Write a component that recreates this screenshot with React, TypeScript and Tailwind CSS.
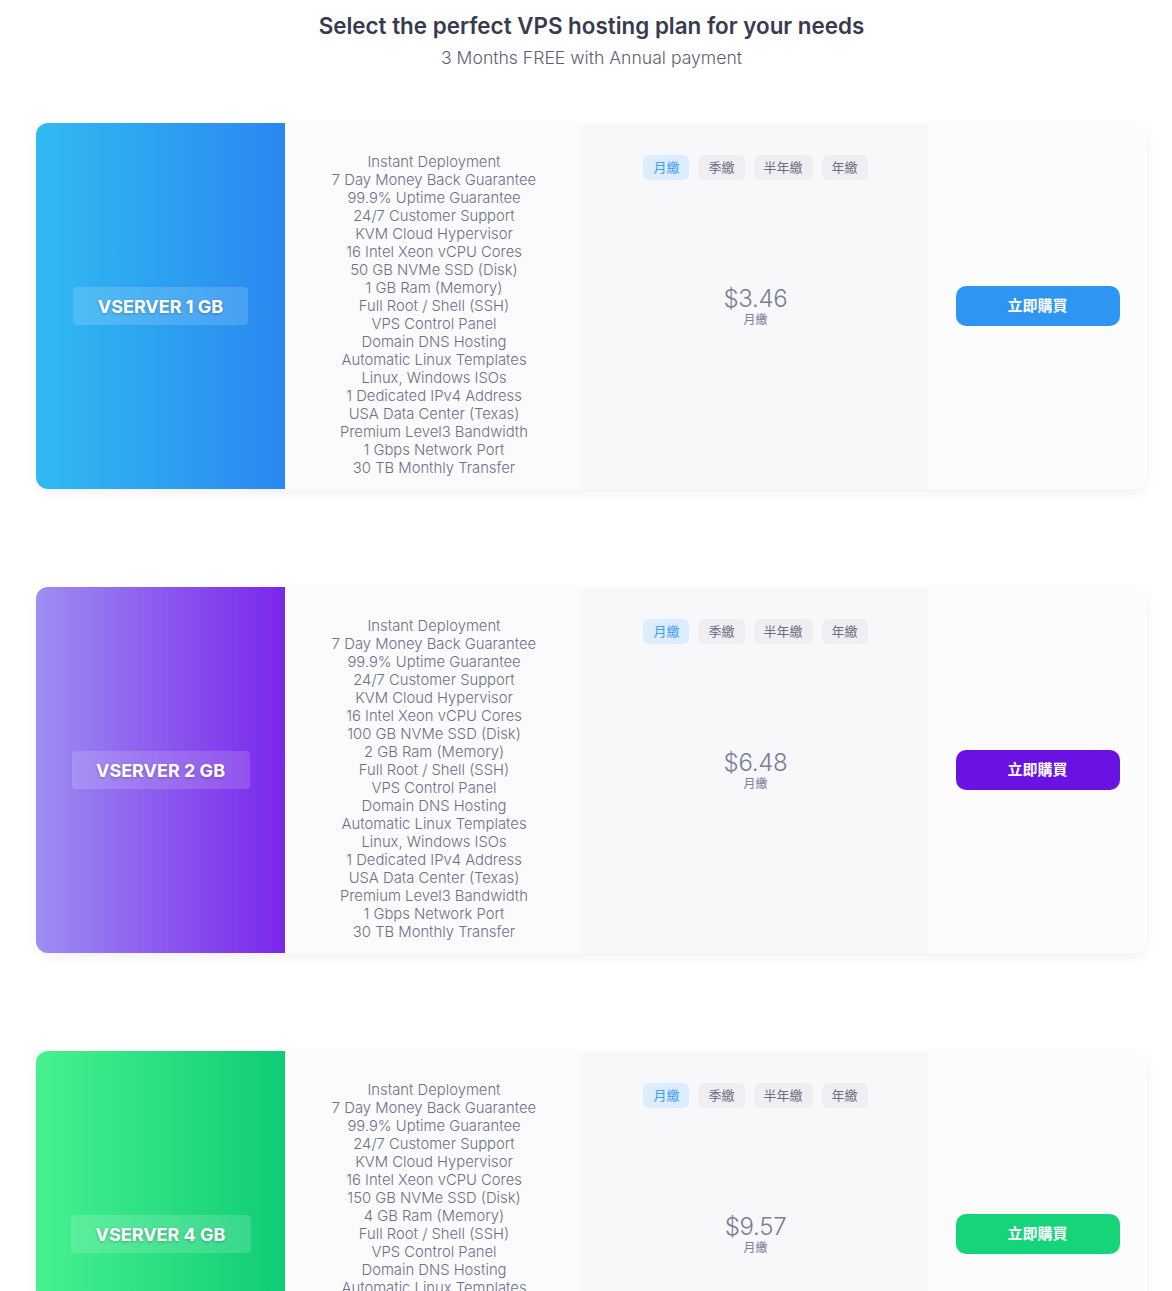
import React from "react";

interface Plan {
  name: string;
  disk: string;
  ram: string;
  price: string;
  panel: string;
  label: string;
  button: string;
}

const plans: Plan[] = [
  {
    name: "VSERVER 1 GB",
    disk: "50 GB NVMe SSD (Disk)",
    ram: "1 GB Ram (Memory)",
    price: "$3.46",
    panel: "bg-[linear-gradient(90deg,#30baf2,#2a88f0)]",
    label: "w-[175px]",
    button: "bg-[#2e95f3]",
  },
  {
    name: "VSERVER 2 GB",
    disk: "100 GB NVMe SSD (Disk)",
    ram: "2 GB Ram (Memory)",
    price: "$6.48",
    panel: "bg-[linear-gradient(90deg,#9d8ef1,#7b26ec)]",
    label: "w-[178px]",
    button: "bg-[#6a12e2]",
  },
  {
    name: "VSERVER 4 GB",
    disk: "150 GB NVMe SSD (Disk)",
    ram: "4 GB Ram (Memory)",
    price: "$9.57",
    panel: "bg-[linear-gradient(90deg,#48f18f,#0ecc75)]",
    label: "w-[180px]",
    button: "bg-[#16d47a]",
  },
];

const features = (p: Plan) => [
  "Instant Deployment",
  "7 Day Money Back Guarantee",
  "99.9% Uptime Guarantee",
  "24/7 Customer Support",
  "KVM Cloud Hypervisor",
  "16 Intel Xeon vCPU Cores",
  p.disk,
  p.ram,
  "Full Root / Shell (SSH)",
  "VPS Control Panel",
  "Domain DNS Hosting",
  "Automatic Linux Templates",
  "Linux, Windows ISOs",
  "1 Dedicated IPv4 Address",
  "USA Data Center (Texas)",
  "Premium Level3 Bandwidth",
  "1 Gbps Network Port",
  "30 TB Monthly Transfer",
];

const tabs = ["月繳", "季繳", "半年繳", "年繳"];

const PlanCard = ({ plan }: { plan: Plan }) => {
  return (
    <section className="flex h-[366px] rounded-xl bg-[#fcfcfd] shadow-[0_4px_12px_rgba(0,0,0,0.06)] overflow-hidden">
      <div className={`w-[249px] shrink-0 flex items-center justify-center ${plan.panel}`}>
        <div
          className={`${plan.label} h-[38px] rounded bg-white/15 flex items-center justify-center text-white font-bold text-[18px] [text-shadow:0_1px_3px_rgba(0,0,0,0.25)]`}
        >
          {plan.name}
        </div>
      </div>
      <div className="w-[298px] shrink-0 bg-[#fbfbfb] flex flex-col items-center pt-[30px] text-[14.8px] leading-[18px] text-[#6b6f8a] font-light whitespace-nowrap">
        {features(plan).map((f) => (
          <div key={f}>{f}</div>
        ))}
      </div>
      <div className="w-[345px] shrink-0 bg-[#f8f8fa] flex flex-col items-center pt-[32px]">
        <div className="flex gap-[9px] text-[13px]">
          {tabs.map((t, i) => (
            <span
              key={t}
              className={
                i === 0
                  ? "h-[25px] px-[10px] flex items-center rounded-md bg-[#dcedff] text-[#3d9df8]"
                  : "h-[25px] px-[10px] flex items-center rounded-md bg-[#efeff3] text-[#6d6d80]"
              }
            >
              {t}
            </span>
          ))}
        </div>
        <div className="mt-[104px] flex flex-col items-center text-[#787d99]">
          <div className="text-[24px] leading-[29px] font-light tracking-[-0.3px]">{plan.price}</div>
          <div className="text-[12px] leading-[14px]">月繳</div>
        </div>
      </div>
      <div className="flex-1 flex items-center justify-center">
        <button
          className={`w-[164px] h-[40px] rounded-[10px] ${plan.button} text-white font-bold text-[15px]`}
        >
          立即購買
        </button>
      </div>
    </section>
  );
};

export default function App() {
  return (
    <div className="h-[1291px] overflow-hidden bg-white font-['Inter','Noto_Sans_CJK_TC',sans-serif]">
      <div className="w-[1111px] ml-[36px] pt-[11px]">
        <h1 className="text-center text-[22.4px] leading-[30px] font-semibold text-[#393a4f]">
          Select the perfect VPS hosting plan for your needs
        </h1>
        <p className="text-center text-[17.6px] leading-[24px] mt-[5px] text-[#5e6072] font-light">
          3 Months FREE with Annual payment
        </p>
        <div className="mt-[53px] flex flex-col gap-[98px]">
          {plans.map((p) => (
            <PlanCard key={p.name} plan={p} />
          ))}
        </div>
      </div>
    </div>
  );
}
